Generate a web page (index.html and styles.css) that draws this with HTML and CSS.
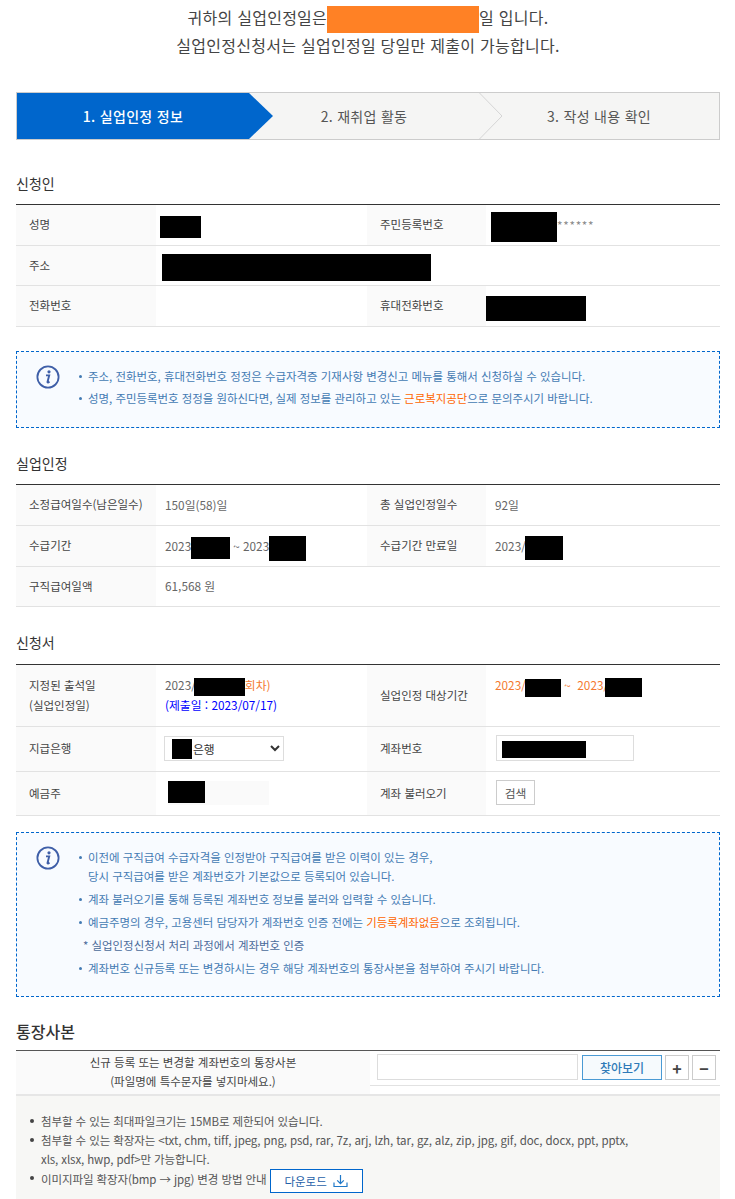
FILE: index.html
```html
<!DOCTYPE html>
<html lang="ko">
<head>
<meta charset="utf-8">
<title>실업인정 정보</title>
<link rel="stylesheet" href="styles.css">
</head>
<body>
<main class="page">
  <header class="intro">
    <p>귀하의 실업인정일은<span class="mask-orange"></span>일 입니다.</p>
    <p>실업인정신청서는 실업인정일 당일만 제출이 가능합니다.</p>
  </header>

  <ol class="steps">
    <li class="step step-one">1. 실업인정 정보</li>
    <li class="step step-two">2. 재취업 활동
      <svg class="step-chevron" width="24" height="46" viewBox="0 0 24 46"><path d="M0.5 0 L23 23 L0.5 46" fill="none" stroke="#d5d5d5"/></svg>
    </li>
    <li class="step step-three">3. 작성 내용 확인</li>
  </ol>

  <h2 class="title title-first">신청인</h2>
  <table class="info">
    <colgroup><col class="c1"><col class="c2"><col class="c3"><col class="c4"></colgroup>
    <tr class="h41">
      <th>성명</th><td><span class="mask m-name"></span></td>
      <th>주민등록번호</th><td><span class="mask m-rrn"></span><span class="stars">******</span></td>
    </tr>
    <tr class="h40">
      <th>주소</th><td colspan="3"><span class="mask m-addr"></span></td>
    </tr>
    <tr class="h41">
      <th>전화번호</th><td></td>
      <th>휴대전화번호</th><td><span class="mask m-mobile"></span></td>
    </tr>
  </table>

  <section class="notice notice-short">
    <svg class="notice-icon" width="24" height="24" viewBox="0 0 24 24"><circle cx="12" cy="12" r="10.6" fill="none" stroke="#3f5fa8" stroke-width="1.8"/><circle cx="13" cy="6.8" r="1.6" fill="#3f5fa8"/><path d="M10 10.4h3.2l-1.7 6.6c-.1.5.3.7.8.4l1.2-.8" fill="none" stroke="#3f5fa8" stroke-width="1.9"/></svg>
    <ul class="notice-list gap-short">
      <li>주소, 전화번호, 휴대전화번호 정정은 수급자격증 기재사항 변경신고 메뉴를 통해서 신청하실 수 있습니다.</li>
      <li>성명, 주민등록번호 정정을 원하신다면, 실제 정보를 관리하고 있는 <em class="hot">근로복지공단</em>으로 문의주시기 바랍니다.</li>
    </ul>
  </section>

  <h2 class="title title-second">실업인정</h2>
  <table class="info">
    <colgroup><col class="c1"><col class="c2"><col class="c3"><col class="c4"></colgroup>
    <tr class="h41">
      <th>소정급여일수(남은일수)</th><td>150일(58)일</td>
      <th>총 실업인정일수</th><td>92일</td>
    </tr>
    <tr class="h41">
      <th>수급기간</th><td>2023/<span class="mask m-period1"></span> ~ 2023/<span class="mask m-period2"></span></td>
      <th>수급기간 만료일</th><td>2023/<span class="mask m-expire"></span></td>
    </tr>
    <tr class="h40">
      <th>구직급여일액</th><td>61,568 원</td><th class="plain"></th><td></td>
    </tr>
  </table>

  <h2 class="title title-third">신청서</h2>
  <table class="info">
    <colgroup><col class="c1"><col class="c2"><col class="c3"><col class="c4"></colgroup>
    <tr class="h62">
      <th class="two-line">지정된 출석일<br>(실업인정일)</th>
      <td class="two-line">2023/<span class="mask m-attend"></span><span class="orange">회차)</span><br><span class="blue">(제출일 : 2023/07/17)</span></td>
      <th>실업인정 대상기간</th>
      <td class="top-cell orange">2023/<span class="mask m-target1"></span> ~ &nbsp;2023/<span class="mask m-target2"></span></td>
    </tr>
    <tr class="h45">
      <th>지급은행</th>
      <td>
        <span class="select-wrap">
          <select class="bank"><option>은행</option></select>
          <span class="mask m-bank"></span>
        </span>
      </td>
      <th>계좌번호</th>
      <td><span class="account-field"><span class="mask m-account"></span></span></td>
    </tr>
    <tr class="h44">
      <th>예금주</th>
      <td><span class="holder-field"><span class="mask m-holder"></span></span></td>
      <th>계좌 불러오기</th>
      <td><button class="btn-search" type="button">검색</button></td>
    </tr>
  </table>

  <section class="notice notice-tall">
    <svg class="notice-icon" width="24" height="24" viewBox="0 0 24 24"><circle cx="12" cy="12" r="10.6" fill="none" stroke="#3f5fa8" stroke-width="1.8"/><circle cx="13" cy="6.8" r="1.6" fill="#3f5fa8"/><path d="M10 10.4h3.2l-1.7 6.6c-.1.5.3.7.8.4l1.2-.8" fill="none" stroke="#3f5fa8" stroke-width="1.9"/></svg>
    <ul class="notice-list gap-tall">
      <li>이전에 구직급여 수급자격을 인정받아 구직급여를 받은 이력이 있는 경우,<br>당시 구직급여를 받은 계좌번호가 기본값으로 등록되어 있습니다.</li>
      <li>계좌 불러오기를 통해 등록된 계좌번호 정보를 불러와 입력할 수 있습니다.</li>
      <li>예금주명의 경우, 고용센터 담당자가 계좌번호 인증 전에는 <em class="hot">기등록계좌없음</em>으로 조회됩니다.</li>
      <li class="sub">* 실업인정신청서 처리 과정에서 계좌번호 인증</li>
      <li>계좌번호 신규등록 또는 변경하시는 경우 해당 계좌번호의 통장사본을 첨부하여 주시기 바랍니다.</li>
    </ul>
  </section>

  <h2 class="title title-fourth">통장사본</h2>
  <div class="upload">
    <div class="upload-label">신규 등록 또는 변경할 계좌번호의 통장사본<br>(파일명에 특수문자를 넣지마세요.)</div>
    <div class="upload-controls">
      <span class="file-name"></span>
      <button class="btn-browse" type="button">찾아보기</button>
      <button class="btn-square" type="button">+</button>
      <button class="btn-square" type="button">−</button>
    </div>
  </div>
  <section class="attach">
    <ul class="attach-list">
      <li>첨부할 수 있는 최대파일크기는 15MB로 제한되어 있습니다.</li>
      <li>첨부할 수 있는 확장자는 &lt;txt, chm, tiff, jpeg, png, psd, rar, 7z, arj, lzh, tar, gz, alz, zip, jpg, gif, doc, docx, ppt, pptx,<br>xls, xlsx, hwp, pdf&gt;만 가능합니다.</li>
      <li>이미지파일 확장자(bmp → jpg) 변경 방법 안내
        <button class="btn-download" type="button">다운로드
          <svg width="15" height="14" viewBox="0 0 15 14"><path d="M7.5 1v8.5M4.2 6.4l3.3 3.3 3.3-3.3M1 8.5v4h13v-4" fill="none" stroke="#1f78c8" stroke-width="1.2"/></svg>
        </button>
      </li>
    </ul>
  </section>
</main>
</body>
</html>
```
FILE: styles.css
```css
* { box-sizing: border-box; }
html, body { margin: 0; padding: 0; background: #fff; }
body {
  font-family: "Noto Sans CJK KR", "Noto Sans", sans-serif;
  font-size: 12px;
  color: #666;
  overflow: hidden;
}
.page { width: 735px; height: 1199px; padding: 3px 15px 0 16px; overflow: hidden; }

.intro { text-align: center; font-size: 16px; letter-spacing: 0.27px; line-height: 28px; color: #444; }
.intro p { margin: 0; }
.mask-orange { display: inline-block; width: 152px; height: 27px; margin: -10px 0; background: #ff8125; vertical-align: middle; }

.steps {
  display: flex; list-style: none; margin: 33px 0 0; padding: 0; height: 48px;
  border: 1px solid #ccc; background: #f5f5f4;
  font-size: 14px; letter-spacing: 0.3px; line-height: 46px; color: #555;
}
.step { position: relative; text-align: center; }
.step-one {
  width: 256px; padding-right: 24px; background: #0066cc; color: #fff; font-weight: 500;
  clip-path: polygon(0 0, 232px 0, 100% 50%, 232px 100%, 0 100%);
}
.step-two { width: 230px; padding-right: 48px; }
.step-three { flex: 1; padding-right: 24px; }
.step-chevron { position: absolute; right: 0; top: 0; }

.title { margin: 0 0 11px; font-size: 14px; font-weight: 400; line-height: 20px; color: #333; }
.title-first { margin-top: 33px; }
.title-second { margin-top: 25px; }
.title-third { margin: 25px 0 12px; }
.title-fourth { margin: 24px 0 9px; font-size: 16px; font-weight: 500; }

.info { width: 100%; table-layout: fixed; border-collapse: separate; border-spacing: 0; border-top: 1px solid #333; }
.c1 { width: 140px; }
.c2 { width: 211px; }
.c3 { width: 119px; }
.info th, .info td { padding: 0 0 2px; border-bottom: 1px solid #e2e2e2; vertical-align: middle; text-align: left; }
.info th { padding-left: 13px; background: #fafafa; font-size: 11.5px; font-weight: 400; color: #444; }
.info th.plain { background: #fff; }
.info td { padding-left: 9px; font-size: 11.8px; white-space: nowrap; }
.info .two-line { line-height: 20px; }
.info .top-cell { vertical-align: top; padding-top: 11px; }
.h40 { height: 40px; }
.h41 { height: 41px; }
.h44 { height: 44px; }
.h45 { height: 45px; }
.h62 { height: 62px; }

.mask { position: relative; top: 1px; display: inline-block; background: #000; vertical-align: middle; margin-top: -20px; margin-bottom: -20px; }
.m-name { width: 41px; height: 22px; margin-left: -5px; }
.m-rrn { width: 66px; height: 30px; margin-left: -4px; }
.stars { letter-spacing: 0.7px; color: #888; }
.m-addr { width: 269px; height: 27px; margin-left: -3px; }
.m-mobile { width: 100px; height: 25px; margin-left: -9px; }
.m-period1 { width: 39px; height: 22px; margin-left: -5px; }
.m-period2 { width: 37px; height: 25px; margin-left: -5px; }
.m-expire { width: 38px; height: 24px; margin-left: -1px; }
.m-attend { width: 51px; height: 18px; margin-left: -2px; }
.m-target1 { width: 36px; height: 18px; margin-left: -1px; }
.m-target2 { width: 37px; height: 19px; margin-left: -3px; }
.m-account { width: 84px; height: 17px; margin-left: 5px; }
.m-holder { width: 37px; height: 22px; }

.orange { color: #f47a30; }
.blue { color: #0000ff; }
.hot { color: #ff6600; font-style: normal; }

.select-wrap { position: relative; display: inline-block; vertical-align: middle; margin-left: -1px; }
.bank { display: block; width: 120px; height: 25px; padding: 0 0 0 24px; border: 1px solid #ddd; background: #fff; color: #333; font: inherit; border-radius: 0; }
.m-bank { position: absolute; left: 8px; top: 3px; width: 20px; height: 20px; margin: 0; }
.account-field { display: flex; align-items: center; width: 138px; height: 26px; margin-left: 1px; border: 1px solid #ddd; }
.holder-field { display: block; width: 101px; height: 24px; margin-left: 3px; background: #fafafa; }
.holder-field .m-holder { display: block; top: 0; margin: 1px 0 0; }
.btn-search { display: block; width: 39px; height: 25px; margin-left: 1px; padding: 0; border: 1px solid #ccc; background: #fff; color: #555; font: inherit; }

.notice { position: relative; border: 1px dashed #0066cc; background: #f8fbff; padding-left: 62px; }
.notice-short { height: 77px; margin-top: 24px; padding-top: 15px; }
.notice-tall { height: 165px; margin-top: 16px; padding-top: 15px; }
.notice-icon { position: absolute; left: 19px; top: 13px; }
.notice-list { list-style: none; margin: 0; padding: 0 0 0 9px; font-size: 11.44px; color: #437ab3; }
.notice-list li { position: relative; }
.notice-list li::before { content: ""; position: absolute; left: -9px; top: 8px; width: 3px; height: 3px; border-radius: 50%; background: #437ab3; }
.notice-list li.sub { margin-left: -5px; color: #4a6a9a; }
.notice-list li.sub::before { display: none; }
.gap-short li { line-height: 19px; margin-bottom: 3px; }
.gap-tall li { line-height: 19px; margin-bottom: 4px; }

.upload { display: flex; height: 44px; border-top: 1px solid #555; }
.upload-label { width: 354px; padding-top: 2px; background: #fafafa; text-align: center; font-size: 11.5px; line-height: 19px; color: #444; }
.upload-controls { display: flex; flex: 1; height: 35px; padding: 3px 0 0 7px; gap: 3px; border-bottom: 1px solid #e2e2e2; align-items: flex-start; }
.file-name { width: 201px; height: 26px; border: 1px solid #ddd; }
.btn-browse { width: 80px; height: 25px; margin: 1px 0 0 1px; padding: 0; border: 1px solid #4a9ad4; background: #f6fafd; color: #2f7ab8; font: inherit; font-weight: 500; }
.btn-square { width: 24px; height: 25px; margin-top: 1px; padding: 0; border: 1px solid #ccc; background: #fff; color: #444; font: inherit; font-size: 16px; font-weight: 700; line-height: 20px; }

.attach { height: 105px; border-top: 2px solid #e6e6e6; background: #f7f7f5; padding: 16px 0 0 15px; }
.attach-list { list-style: none; margin: 0; padding: 0 0 0 10px; font-size: 11.5px; letter-spacing: -0.1px; line-height: 19px; color: #555; }
.attach-list li { position: relative; }
.attach-list li::before { content: ""; position: absolute; left: -11px; top: 7px; width: 4px; height: 4px; border-radius: 50%; background: #444; }
.btn-download { display: inline-flex; align-items: center; justify-content: center; gap: 6px; width: 93px; height: 24px; padding: 0; border: 1px solid #0066cc; background: #fff; color: #1f5fa8; font: inherit; vertical-align: middle; }
```
